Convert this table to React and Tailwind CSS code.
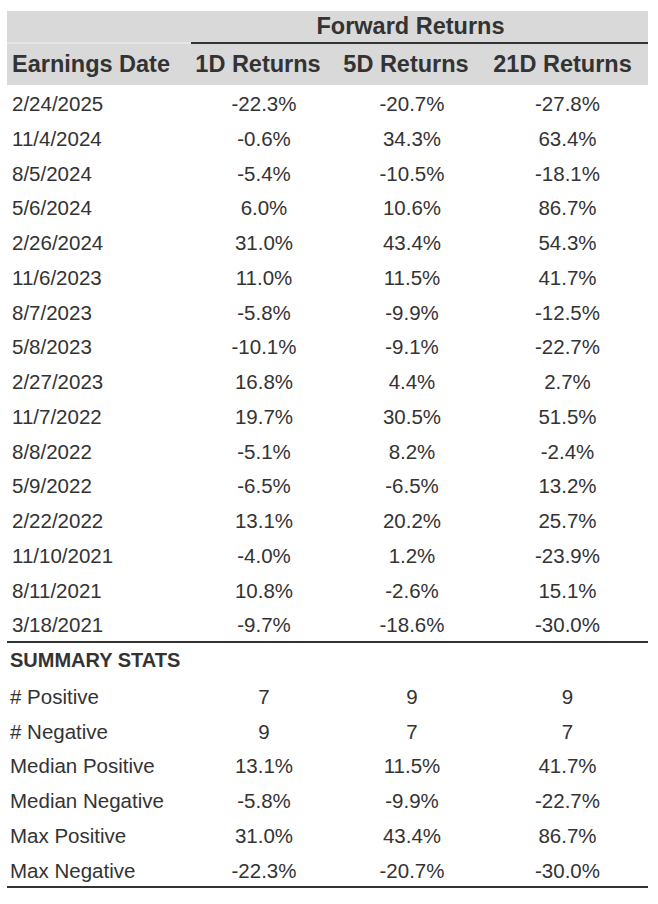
const ROWS = [
  ['2/24/2025', '-22.3%', '-20.7%', '-27.8%'],
  ['11/4/2024', '-0.6%', '34.3%', '63.4%'],
  ['8/5/2024', '-5.4%', '-10.5%', '-18.1%'],
  ['5/6/2024', '6.0%', '10.6%', '86.7%'],
  ['2/26/2024', '31.0%', '43.4%', '54.3%'],
  ['11/6/2023', '11.0%', '11.5%', '41.7%'],
  ['8/7/2023', '-5.8%', '-9.9%', '-12.5%'],
  ['5/8/2023', '-10.1%', '-9.1%', '-22.7%'],
  ['2/27/2023', '16.8%', '4.4%', '2.7%'],
  ['11/7/2022', '19.7%', '30.5%', '51.5%'],
  ['8/8/2022', '-5.1%', '8.2%', '-2.4%'],
  ['5/9/2022', '-6.5%', '-6.5%', '13.2%'],
  ['2/22/2022', '13.1%', '20.2%', '25.7%'],
  ['11/10/2021', '-4.0%', '1.2%', '-23.9%'],
  ['8/11/2021', '10.8%', '-2.6%', '15.1%'],
  ['3/18/2021', '-9.7%', '-18.6%', '-30.0%'],
]

const STATS = [
  ['# Positive', '7', '9', '9'],
  ['# Negative', '9', '7', '7'],
  ['Median Positive', '13.1%', '11.5%', '41.7%'],
  ['Median Negative', '-5.8%', '-9.9%', '-22.7%'],
  ['Max Positive', '31.0%', '43.4%', '86.7%'],
  ['Max Negative', '-22.3%', '-20.7%', '-30.0%'],
]

const GRID = 'grid grid-cols-[184px_146px_150px_161px]'

function DataRow({ row, labelPad = 'pl-[5px]' }) {
  return (
    <div className={`${GRID} h-[34.75px] leading-[37px] text-[20.5px]`}>
      <div className={`${labelPad} whitespace-nowrap`}>{row[0]}</div>
      <div className="text-center">{row[1]}</div>
      <div className="text-center">{row[2]}</div>
      <div className="text-center">{row[3]}</div>
    </div>
  )
}

export default function App() {
  return (
    <div className="min-h-[904px] w-[658px] bg-white text-[#333333] font-['Liberation_Sans',Arial,sans-serif]">
      <div className="ml-[7px] w-[641px] pt-[11px]">
        {/* Header */}
        <div className="bg-[#d9d9d9] font-bold text-[23.5px]">
          <div className={`${GRID} h-[33px] leading-[31px] border-b-2 border-[#e6e6e6]`}>
            <div />
            <div className="col-span-3 -mb-[2px] border-b-2 border-[#333333] pr-[18px] text-center whitespace-nowrap">
              Forward Returns
            </div>
          </div>
          <div className={`${GRID} h-[41px] leading-[41px] whitespace-nowrap`}>
            <div className="pl-[5px]">Earnings Date</div>
            <div className="pr-3 text-center">1D Returns</div>
            <div className="pr-3 text-center">5D Returns</div>
            <div className="pr-[10px] text-center">21D Returns</div>
          </div>
        </div>

        {/* Earnings rows */}
        <div className="border-b-2 border-[#333333]">
          {ROWS.map(r => <DataRow key={r[0]} row={r} />)}
        </div>

        {/* Summary */}
        <div className="border-b-2 border-[#333333]">
          <div className="h-[34.75px] pl-[3px] text-[20px] font-bold leading-[35px]">SUMMARY STATS</div>
          {STATS.map(r => <DataRow key={r[0]} row={r} labelPad="pl-[3px]" />)}
        </div>
      </div>
    </div>
  )
}
